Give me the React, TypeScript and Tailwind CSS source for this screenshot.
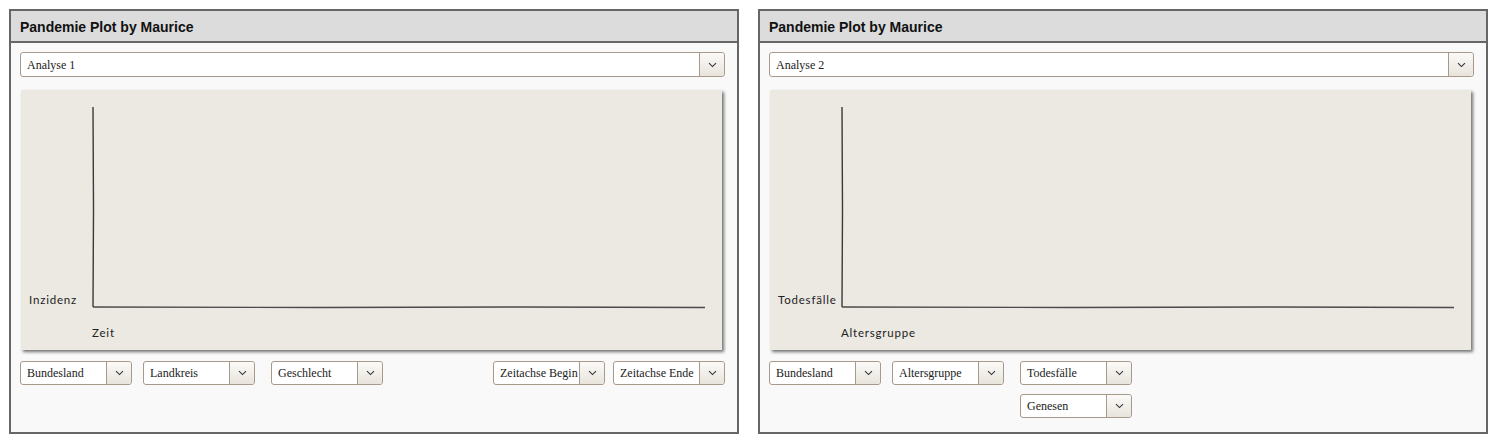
import React from "react";

function Chevron() {
  return (
    <svg width="9" height="6" viewBox="0 0 9 6" fill="none">
      <path d="M1 1.2 L4.5 4.6 L8 1.2" stroke="#333" strokeWidth="1.1" />
    </svg>
  );
}

function Select({ label, className = "" }: { label: string; className?: string }) {
  return (
    <div
      className={`flex items-stretch rounded-[3px] border border-[#a89a8a] bg-white text-[12px] text-[#222] ${className}`}
      style={{ fontFamily: '"Liberation Serif", "Times New Roman", serif' }}
    >
      <div className="flex flex-1 items-center overflow-hidden whitespace-nowrap pl-[6px]">{label}</div>
      <div className="flex w-[25px] items-center justify-center rounded-r-[3px] border-l border-[#a89a8a] bg-gradient-to-b from-[#fbfaf8] to-[#e8e4dc]">
        <Chevron />
      </div>
    </div>
  );
}

function Chart({ yLabel, xLabel }: { yLabel: string; xLabel: string }) {
  const labelStyle = { fontFamily: "Lato, sans-serif", letterSpacing: "0.8px" };
  return (
    <div className="ml-[1px] mr-[3px] h-[260px] bg-[#ece9e3] shadow-[2px_2px_3px_rgba(0,0,0,0.55)]">
      <svg width="100%" height="260" className="block">
        <path d="M72 17 L72.5 120 L72 217" stroke="#3a3a3a" strokeWidth="1.4" fill="none" />
        <path d="M72 217 L300 217.5 L500 217 L684 217.5" stroke="#4a4a4a" strokeWidth="1.4" fill="none" />
        <text x="8" y="214" fontSize="11.5" fill="#222" style={labelStyle}>
          {yLabel}
        </text>
        <text x="71" y="247" fontSize="11.5" fill="#222" style={labelStyle}>
          {xLabel}
        </text>
      </svg>
    </div>
  );
}

function Panel({
  analyse,
  yLabel,
  xLabel,
  children,
}: {
  analyse: string;
  yLabel: string;
  xLabel: string;
  children: React.ReactNode;
}) {
  return (
    <div className="flex h-[425px] w-[730px] flex-col border-2 border-[#666] bg-[#f9f9f9]">
      <div
        className="flex h-[32px] items-center border-b-2 border-[#666] bg-[#dcdcdc] pl-[9px] pt-[2px] text-[14px] font-bold text-[#111]"
        style={{ fontFamily: '"Liberation Sans", Arial, sans-serif' }}
      >
        Pandemie Plot by Maurice
      </div>
      <div className="flex flex-col pl-[9px] pr-[12px] pt-[9px]">
        <Select label={analyse} className="h-[25px]" />
        <div className="mt-[13px]">
          <Chart yLabel={yLabel} xLabel={xLabel} />
        </div>
        <div className="mt-[11px]">{children}</div>
      </div>
    </div>
  );
}

export default function App() {
  return (
    <div className="flex gap-[19px] bg-white pl-[9px] pt-[9px]">
      <Panel analyse="Analyse 1" yLabel="Inzidenz" xLabel="Zeit">
        <div className="flex items-start">
          <Select label="Bundesland" className="h-[24px] w-[112px]" />
          <Select label="Landkreis" className="ml-[11px] h-[24px] w-[112px]" />
          <Select label="Geschlecht" className="ml-[16px] h-[24px] w-[112px]" />
          <div className="ml-auto flex gap-[8px]">
            <Select label="Zeitachse Begin" className="h-[24px] w-[112px]" />
            <Select label="Zeitachse Ende" className="h-[24px] w-[112px]" />
          </div>
        </div>
      </Panel>
      <Panel analyse="Analyse 2" yLabel="Todesfälle" xLabel="Altersgruppe">
        <div className="flex items-start">
          <Select label="Bundesland" className="h-[24px] w-[112px]" />
          <Select label="Altersgruppe" className="ml-[11px] h-[24px] w-[112px]" />
          <div className="ml-[16px] flex flex-col gap-[9px]">
            <Select label="Todesfälle" className="h-[24px] w-[112px]" />
            <Select label="Genesen" className="h-[24px] w-[112px]" />
          </div>
        </div>
      </Panel>
    </div>
  );
}
